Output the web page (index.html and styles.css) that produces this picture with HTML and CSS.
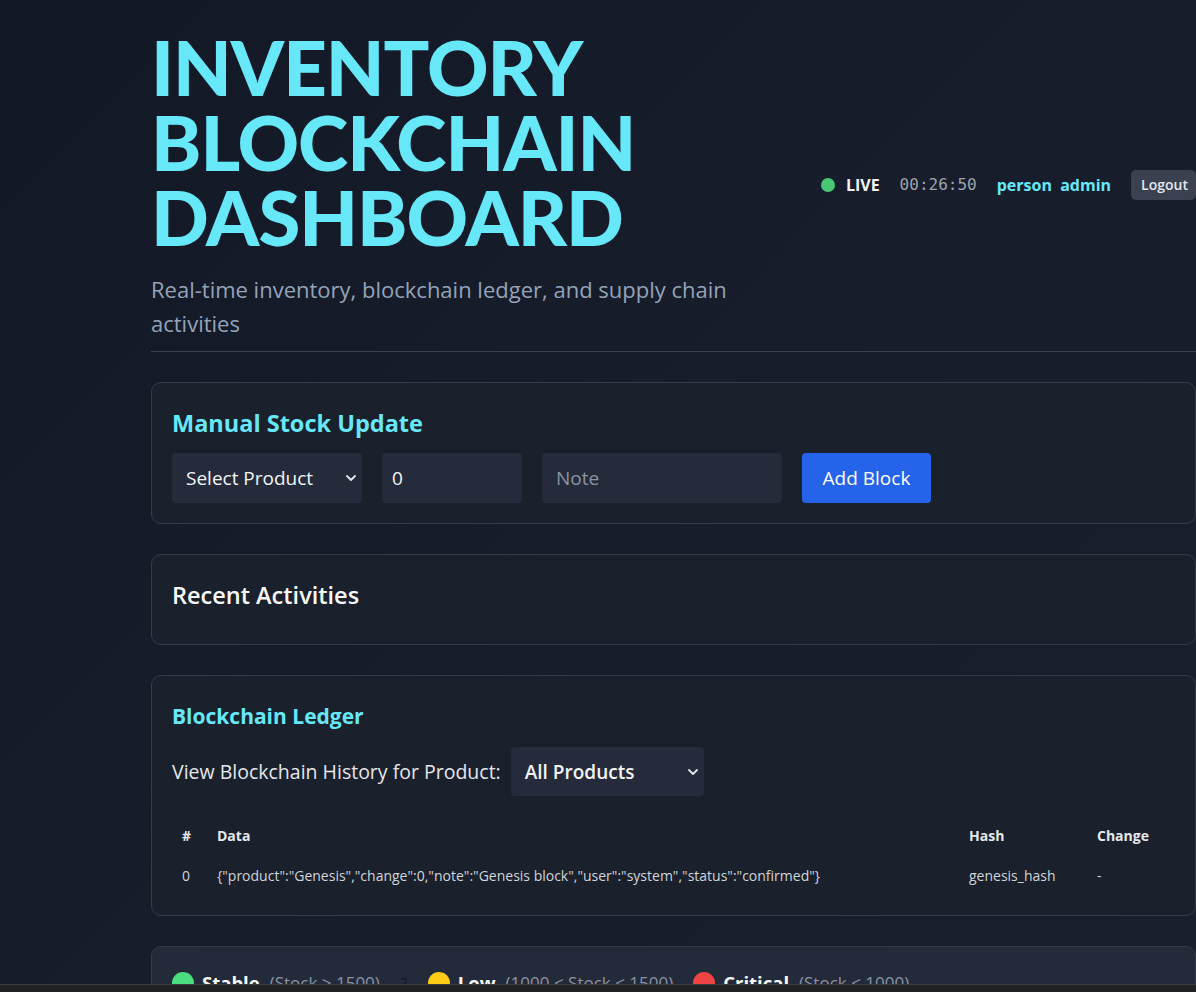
FILE: index.html
```html
<!DOCTYPE html>
<html lang="en">
<head>
<meta charset="utf-8">
<title>Inventory Blockchain Dashboard</title>
<link rel="stylesheet" href="styles.css">
</head>
<body>
<div class="page">
  <header class="header">
    <div class="header-left">
      <h1 class="title">INVENTORY BLOCKCHAIN DASHBOARD</h1>
      <p class="subtitle">Real-time inventory, blockchain ledger, and supply chain activities</p>
    </div>
    <div class="status">
      <span class="live-dot"></span>
      <span class="live">LIVE</span>
      <span class="clock">00:26:50</span>
      <span class="user">person&nbsp; admin</span>
      <button class="logout">Logout</button>
    </div>
  </header>

  <section class="card">
    <h2 class="card-title cyan">Manual Stock Update</h2>
    <div class="form-row">
      <div class="select sel-product">Select Product <span class="chev"><svg width="12" height="8" viewBox="0 0 12 8"><path d="M2 2l4 4 4-4" fill="none" stroke="#e5e7eb" stroke-width="1.8" stroke-linecap="round" stroke-linejoin="round"/></svg></span></div>
      <div class="field qty">0</div>
      <div class="field note">Note</div>
      <button class="btn-primary">Add Block</button>
    </div>
  </section>

  <section class="card card-short">
    <h2 class="card-title white">Recent Activities</h2>
  </section>

  <section class="card">
    <h2 class="card-title cyan small">Blockchain Ledger</h2>
    <div class="filter-row">
      <span class="filter-label">View Blockchain History for Product:</span>
      <div class="select sel-all">All Products <span class="chev"><svg width="12" height="8" viewBox="0 0 12 8"><path d="M2 2l4 4 4-4" fill="none" stroke="#e5e7eb" stroke-width="1.8" stroke-linecap="round" stroke-linejoin="round"/></svg></span></div>
    </div>
    <table class="ledger">
      <thead>
        <tr><th class="c-num">#</th><th class="c-data">Data</th><th class="c-hash">Hash</th><th class="c-change">Change</th></tr>
      </thead>
      <tbody>
        <tr><td class="c-num">0</td><td class="c-data">{"product":"Genesis","change":0,"note":"Genesis block","user":"system","status":"confirmed"}</td><td class="c-hash">genesis_hash</td><td class="c-change">-</td></tr>
      </tbody>
    </table>
  </section>

  <section class="card legend-card">
    <div class="legend">
      <span class="dot green"></span><span class="lg-name">Stable</span><span class="lg-range">(Stock &gt; 1500)</span><span class="lg-count">2</span>
      <span class="dot yellow"></span><span class="lg-name">Low</span><span class="lg-range">(1000 &lt; Stock &lt; 1500)</span>
      <span class="dot red"></span><span class="lg-name">Critical</span><span class="lg-range">(Stock &lt; 1000)</span>
    </div>
  </section>
</div>
<div class="hscroll"></div>
</body>
</html>
```

FILE: styles.css
```css
html, body {
  margin: 0;
  padding: 0;
  height: 100%;
  overflow: hidden;
}
body {
  background: linear-gradient(135deg, #121826 0%, #171d2b 50%, #1a1f2d 100%);
  font-family: "Open Sans", "Noto Sans", sans-serif;
  color: #f3f4f6;
}
.page {
  margin-left: 151px;
  width: 1045px;
  padding-top: 29px;
}
.header {
  display: flex;
  align-items: center;
  justify-content: space-between;
  border-bottom: 1px solid #3a4150;
  padding-bottom: 11px;
}
.header-left {
  width: 600px;
}
.title {
  margin: 0;
  font-family: "Lato", sans-serif;
  font-weight: 900;
  font-size: 76px;
  line-height: 75px;
  color: #67e8f9;
  letter-spacing: -1px;
}
.subtitle {
  margin: 18px 0 0 0;
  font-size: 22px;
  line-height: 34px;
  color: #94a3b8;
}
.status {
  display: flex;
  align-items: center;
  margin-top: 0;
}
.live-dot {
  width: 14px;
  height: 14px;
  border-radius: 50%;
  background: #48c774;
  margin-right: 11px;
}
.live {
  font-weight: 700;
  font-size: 16px;
  color: #f3f4f6;
  margin-right: 20px;
}
.clock {
  font-family: "DejaVu Sans Mono", monospace;
  font-size: 16px;
  color: #9ca3af;
  margin-right: 20px;
}
.user {
  font-weight: 700;
  font-size: 16px;
  color: #67e8f9;
  margin-right: 20px;
}
.logout {
  background: #3a4252;
  color: #e5e7eb;
  border: none;
  border-radius: 5px;
  font-family: inherit;
  font-weight: 600;
  font-size: 14px;
  height: 30px;
  padding: 0 8px 0 10px;
}
.card {
  margin-top: 30px;
  background: #1a202c;
  border: 1px solid #343b4a;
  border-radius: 10px;
  padding: 20px 20px 20px 20px;
}
.card-title {
  margin: 0;
  font-size: 23.5px;
  font-weight: 700;
  line-height: 40px;
}
.card-title.cyan { color: #67e8f9; }
.card-title.white { color: #f9fafb; font-weight: 600; }
.card-title.small { font-size: 21px; }
.card-short {
  padding-top: 20px;
  padding-bottom: 29px;
}
.form-row {
  display: flex;
  gap: 20px;
  margin-top: 10px;
}
.select, .field {
  height: 50px;
  background: #252b3b;
  border-radius: 4px;
  display: flex;
  align-items: center;
  padding: 0 14px;
  box-sizing: border-box;
  font-size: 19px;
  color: #f3f4f6;
}
.select { justify-content: space-between; padding-right: 5px; }
.chev { display: flex; align-items: center; margin-left: 8px; }
.sel-product { width: 190px; }
.qty { width: 140px; padding-left: 10px; }
.note { width: 240px; color: #8b93a3; }
.btn-primary {
  height: 50px;
  width: 129px;
  background: #2563eb;
  color: #fff;
  border: none;
  border-radius: 4px;
  font-family: inherit;
  font-size: 19px;
}
.filter-row {
  display: flex;
  align-items: center;
  margin-top: 11px;
}
.filter-label {
  font-size: 19.5px;
  color: #e5e7eb;
  margin-right: 10px;
}
.sel-all {
  width: 193px;
  height: 49px;
  font-weight: 600;
}
.ledger {
  width: 100%;
  border-collapse: collapse;
  margin-top: 20px;
  font-size: 14px;
}
.ledger th {
  text-align: left;
  font-weight: 700;
  color: #e5e7eb;
  padding: 10px;
}
.ledger td {
  text-align: left;
  color: #d1d5db;
  padding: 10px;
  height: 20px;
}
.ledger .c-num { width: 15px; }
.ledger .c-hash { width: 108px; }
.ledger .c-change { width: 68px; }
.legend-card {
  background: #232a3a;
}
.legend {
  display: flex;
  align-items: center;
  padding-top: 3px;
}
.dot {
  width: 22px;
  height: 22px;
  border-radius: 50%;
  margin-right: 8px;
}
.dot.green { background: #4ade80; }
.dot.yellow { background: #facc15; }
.dot.red { background: #ef4444; }
.lg-name {
  font-weight: 700;
  font-size: 18.5px;
  color: #f9fafb;
  margin-right: 10px;
}
.lg-range {
  font-size: 17px;
  color: #8b93a3;
  margin-right: 20px;
}
.lg-count {
  font-size: 14px;
  color: #111827;
  margin-right: 20px;
}
.hscroll {
  position: fixed;
  left: 0;
  right: 0;
  bottom: 0;
  height: 7px;
  background: #202123;
  border-top: 1px solid #3a3b3e;
}
```
